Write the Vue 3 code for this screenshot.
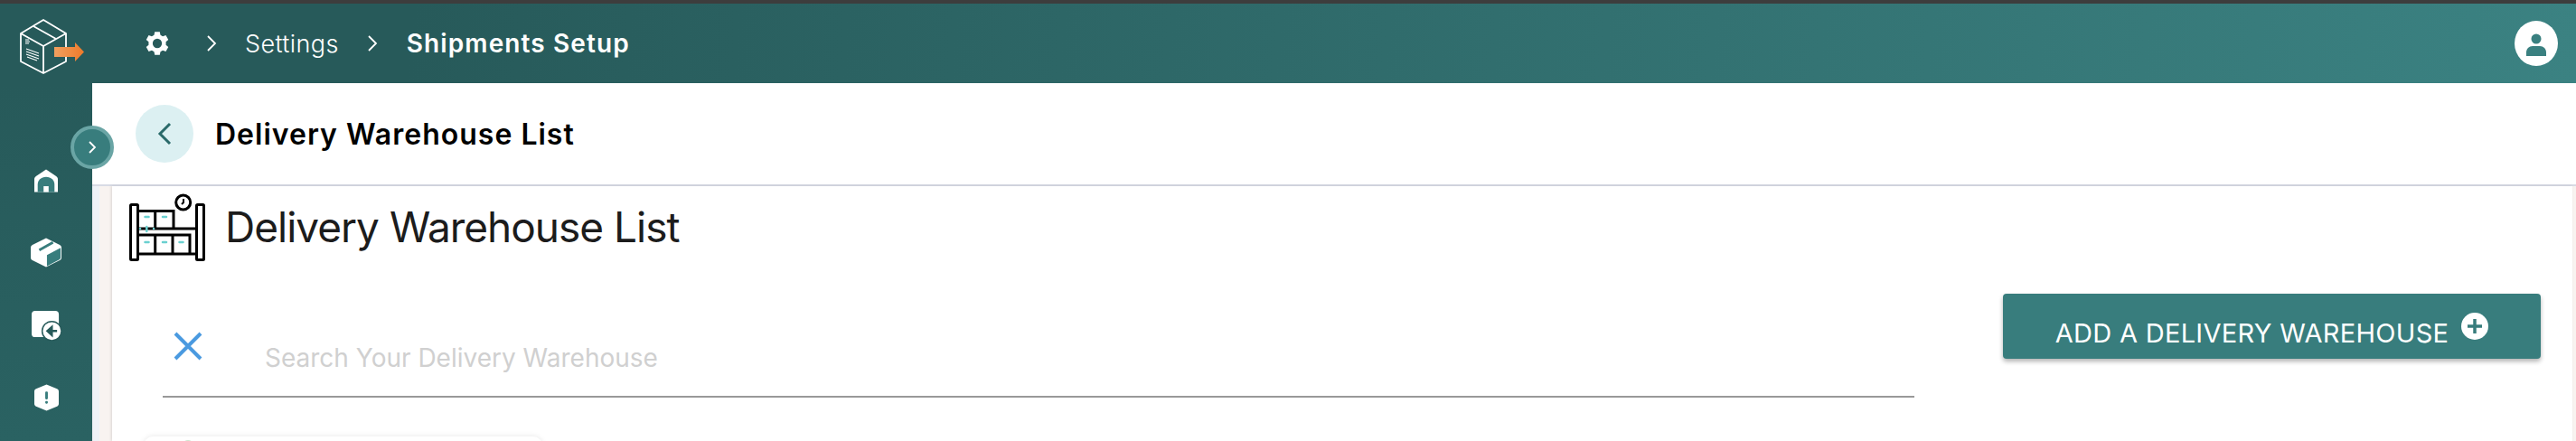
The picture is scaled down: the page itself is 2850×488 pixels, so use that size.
<template>
  <div class="page">
    <div class="topline"></div>
    <header class="topbar">
      <div class="logo">
        <svg width="72" height="68" viewBox="0 0 72 68" fill="none" stroke="#fff" stroke-width="1.800" stroke-linejoin="round">
          <path d="M1 23 26 8 51 23V54L26 67 1 54Z" />
          <path d="M1 23 26 37 51 23M26 37V67M15 15 40 29" />
          <path d="M6 30h4M6 32h5M6 34h4" stroke-width="1.100" />
          <path d="M7 40 21 45M7 43 21 48M7 46 21 51M8 49 19 53" stroke-width="1.100" />
          <path d="M38 38H61V33L71 43.500 61 54V49H38Z" fill="url(#arrowfill)" stroke="none" />
          <defs>
            <linearGradient id="arrowfill" x1="0" x2="1" y1="0" y2="0">
              <stop offset="0" stop-color="#f0a060" />
              <stop offset="1" stop-color="#ee7a2a" />
            </linearGradient>
          </defs>
        </svg>
      </div>
      <div class="crumbs">
        <svg class="gear" width="28" height="28" viewBox="0 0 24 24">
          <path fill="#fff" fill-rule="evenodd" d="M9.600 1h4.800l.6 3 2.200 1.300 2.900-1 2.400 4.200-2.300 2V13.500l2.300 2-2.400 4.200-2.900-1L15 20l-.6 3H9.600L9 20l-2.200-1.300-2.900 1L1.500 15.500l2.300-2V10.500l-2.300-2 2.400-4.200 2.900 1L9 4zM12 7.600a4.400 4.400 0 1 0 0 8.800 4.400 4.400 0 0 0 0-8.800z" />
        </svg>
        <svg class="sep first" width="12" height="20" viewBox="0 0 12 20"><path d="M2 2l8 8-8 8" fill="none" stroke="#fff" stroke-width="1.800" /></svg>
        <span class="crumb">Settings</span>
        <svg class="sep" width="12" height="20" viewBox="0 0 12 20"><path d="M2 2l8 8-8 8" fill="none" stroke="#fff" stroke-width="1.800" /></svg>
        <span class="crumb current">Shipments Setup</span>
      </div>
      <svg class="avatar" width="48" height="50" viewBox="0 0 48 50">
        <ellipse cx="24" cy="25" rx="24" ry="25" fill="#fff" />
        <circle cx="24" cy="20" r="5.500" fill="#3a8080" />
        <path d="M13 39v-4c0-4 3-7 7-7h8c4 0 7 3 7 7v4z" fill="#3a8080" />
      </svg>
    </header>

    <div class="body">
      <aside class="sidebar">
        <svg class="nav-icon home" width="26" height="26" viewBox="0 0 28 27">
          <path fill="#fff" d="M14 0 26 8c1.300.9 2 2 2 3.500V27H0V11.500C0 10 .7 8.900 2 8z" />
          <path fill="#387d7d" d="M14 9c6 0 10 4 10 9v9H4V18C4 13 8 9 14 9z" />
          <rect x="11" y="20" width="6" height="7" fill="#fff" />
        </svg>
        <svg class="nav-icon" width="34" height="33" viewBox="0 0 36 34">
          <path fill="#fff" d="M18 0 34 8Q36 9 36 11V23Q36 25 34 26L18 34 2 26Q0 25 0 23V11Q0 9 2 8z" />
          <path fill="#387d7d" d="M35 11.500 19 20V33L33 25.500Q35 24.500 35 23z" />
          <path stroke="#387d7d" stroke-width="3" d="M10 14 26 5" />
        </svg>
        <svg class="nav-icon" width="33" height="33" viewBox="0 0 34 34">
          <rect x="0" y="0" width="31" height="30" rx="4" fill="#fff" />
          <circle cx="23" cy="23" r="11" fill="#fff" stroke="#275a5a" stroke-width="1.500" />
          <path d="M29 23H23M23 18.500 18 23l5 4.500z" fill="#275a5a" stroke="#275a5a" stroke-width="2.500" />
        </svg>
        <svg class="nav-icon" width="27" height="30" viewBox="0 0 28 30">
          <path fill="#fff" d="M14 0 26 5c1.200.5 2 1.500 2 3V22c0 1.500-.8 2.500-2 3L14 30 2 25c-1.200-.5-2-1.500-2-3V8c0-1.500.8-2.500 2-3z" />
          <rect x="12.500" y="8" width="3" height="9" rx="1.200" fill="#387d7d" />
          <rect x="12.500" y="19" width="3" height="3" rx="1.200" fill="#387d7d" />
        </svg>
      </aside>

      <button class="toggle">
        <svg width="12" height="16" viewBox="0 0 12 16"><path d="M3 2l6 6-6 6" fill="none" stroke="#fff" stroke-width="1.800" /></svg>
      </button>

      <main class="main">
        <div class="subheader">
          <button class="back">
            <svg width="16" height="26" viewBox="0 0 16 26"><path d="M14 2 3 13l11 11" fill="none" stroke="#2a6a6a" stroke-width="3" /></svg>
          </button>
          <h2 class="subtitle">Delivery Warehouse List</h2>
        </div>
        <div class="content-wrap">
          <section class="panel">
            <div class="title-row">
              <svg class="wh-icon" width="86" height="76" viewBox="0 0 86 76" fill="none" stroke="#000" stroke-width="3">
                <rect x="1.500" y="12.500" width="8" height="61" rx="1" />
                <rect x="74.500" y="12.500" width="8" height="61" rx="1" />
                <path d="M9.500 39H74.500M9.500 67H74.500" />
                <path d="M9.500 19.500H49V39M28.700 19.500V39" />
                <path d="M9.500 46H67V67M28.700 46V67M48 46V67" />
                <circle cx="59.700" cy="10" r="8" />
                <path d="M60 6v4l-2 2" stroke-width="2" />
                <g stroke="#6ad0d0" stroke-width="2.500" stroke-linecap="round">
                  <path d="M17.500 26h4M37 26h4M17.500 54h4M37 54h4M55.500 54h4" />
                  <path d="M12 39h.1M19.300 37v5M27 39h.1" />
                </g>
              </svg>
              <h1 class="title">Delivery Warehouse List</h1>
            </div>
            <div class="tools">
              <div class="search">
                <svg class="clear" width="32" height="32" viewBox="0 0 32 32"><path d="M2 2 30 30M30 2 2 30" stroke="#4a9ae0" stroke-width="4" /></svg>
                <div class="placeholder">Search Your Delivery Warehouse</div>
              </div>
              <button class="add">
                <span>ADD A DELIVERY WAREHOUSE</span>
                <svg class="plus" width="30" height="30" viewBox="0 0 30 30">
                  <circle cx="15" cy="15" r="15" fill="#fff" />
                  <path d="M15 7v16M7 15h16" stroke="#387d7d" stroke-width="3.500" />
                </svg>
              </button>
            </div>
            <div class="card">
              <div class="card-dot"></div>
            </div>
          </section>
        </div>
      </main>
    </div>
  </div>
</template>

<script setup>
</script>

<style>
html,
body {
  margin: 0;
  background: #fff;
}
</style>

<style scoped>
.page {
  width: 2850px;
  height: 488px;
  overflow: hidden;
  display: flex;
  flex-direction: column;
  position: relative;
  font-family: Inter, "Liberation Sans", sans-serif;
}
.topline {
  height: 4px;
  background: #3d3d3d;
}
.topbar {
  height: 88px;
  display: flex;
  align-items: center;
  background: linear-gradient(95deg, #275a5a 0%, #275a5a 16%, #3b8282 100%);
  color: #fff;
}
.logo {
  width: 102px;
  padding-left: 22px;
  box-sizing: border-box;
  display: flex;
}
.crumbs {
  display: flex;
  align-items: center;
  margin-left: 58px;
  flex: 1;
}
.sep {
  margin-right: 32px;
}
.sep.first {
  margin-left: 40px;
  margin-right: 31px;
}
.crumb {
  font-size: 27px;
  font-weight: 300;
  letter-spacing: 0.4px;
  margin-right: 31px;
}
.crumb.current {
  font-size: 28px;
  font-weight: 600;
  letter-spacing: 1.1px;
  margin-right: 0;
}
.avatar {
  margin-right: 20px;
}
.body {
  flex: 1;
  display: flex;
  position: relative;
  min-height: 0;
}
.sidebar {
  width: 102px;
  background: linear-gradient(180deg, #275a5a, #2a6262);
  display: flex;
  flex-direction: column;
  align-items: center;
  padding-top: 95px;
  box-sizing: border-box;
  gap: 48px;
}
.nav-icon {
  display: block;
}
.home {
  margin-bottom: 2px;
}
.toggle {
  position: absolute;
  left: 78px;
  top: 47px;
  width: 48px;
  height: 48px;
  padding: 0;
  box-sizing: border-box;
  border-radius: 50%;
  border: 4px solid #6aa5a5;
  background: #387d7d;
  display: flex;
  align-items: center;
  justify-content: center;
}
.main {
  flex: 1;
  display: flex;
  flex-direction: column;
  min-width: 0;
}
.subheader {
  height: 114px;
  flex: none;
  box-sizing: border-box;
  border-bottom: 2px solid #d8dbe5;
  display: flex;
  align-items: center;
  padding-left: 48px;
  background: #fff;
}
.back {
  width: 64px;
  height: 64px;
  padding: 0;
  border: 0;
  border-radius: 50%;
  background: #dcf0f2;
  display: flex;
  align-items: center;
  justify-content: center;
}
.subtitle {
  margin: 0 0 0 24px;
  font-size: 32px;
  font-weight: 600;
  letter-spacing: 1px;
  color: #000;
}
.content-wrap {
  flex: 1;
  display: flex;
  padding: 0 4px 0 8px;
  background: linear-gradient(90deg, #eef2f7, #eef2f7 8px, #f8f3f0 8px);
  min-height: 0;
}
.panel {
  flex: 1;
  margin-left: 14px;
  background: #fff;
  box-shadow: -1px 0 3px rgba(0, 0, 0, 0.12);
  padding-top: 8px;
  min-width: 0;
}
.title-row {
  display: flex;
  align-items: center;
  padding-left: 19px;
}
.wh-icon {
  flex: none;
}
.title {
  margin: -2px 0 0 20px;
  font-size: 46px;
  font-weight: 400;
  letter-spacing: -1px;
  color: #1c1c1c;
}
.tools {
  display: flex;
  align-items: flex-start;
  padding-left: 56px;
  margin-top: 69px;
}
.search {
  width: 1938px;
  height: 81px;
  box-sizing: border-box;
  border-bottom: 2px solid #999;
  display: flex;
  padding-left: 12px;
}
.clear {
  margin-top: 8px;
}
.placeholder {
  margin: 20px 0 0 69px;
  font-size: 28px;
  color: #d0d0d0;
}
.add {
  margin-left: 98px;
  width: 595px;
  height: 72px;
  margin-top: -34px;
  border: 0;
  border-radius: 4px;
  background: #387d7d;
  color: #fff;
  font-family: Inter, "Liberation Sans", sans-serif;
  font-size: 29px;
  letter-spacing: 0.3px;
  font-weight: 400;
  display: flex;
  align-items: center;
  justify-content: center;
  gap: 14px;
  box-shadow: 0 3px 5px rgba(0, 0, 0, 0.3);
}
.add span {
  margin-top: 14px;
}
.card {
  margin: 43px 0 0 35px;
  width: 441px;
  height: 60px;
  border-radius: 10px;
  background: #fff;
  box-shadow: 0 0 6px rgba(0, 0, 0, 0.1);
  padding: 4px 0 0 42px;
  box-sizing: border-box;
}
.card-dot {
  width: 14px;
  height: 14px;
  border-radius: 50%;
  background: #cfe5cf;
}
</style>
